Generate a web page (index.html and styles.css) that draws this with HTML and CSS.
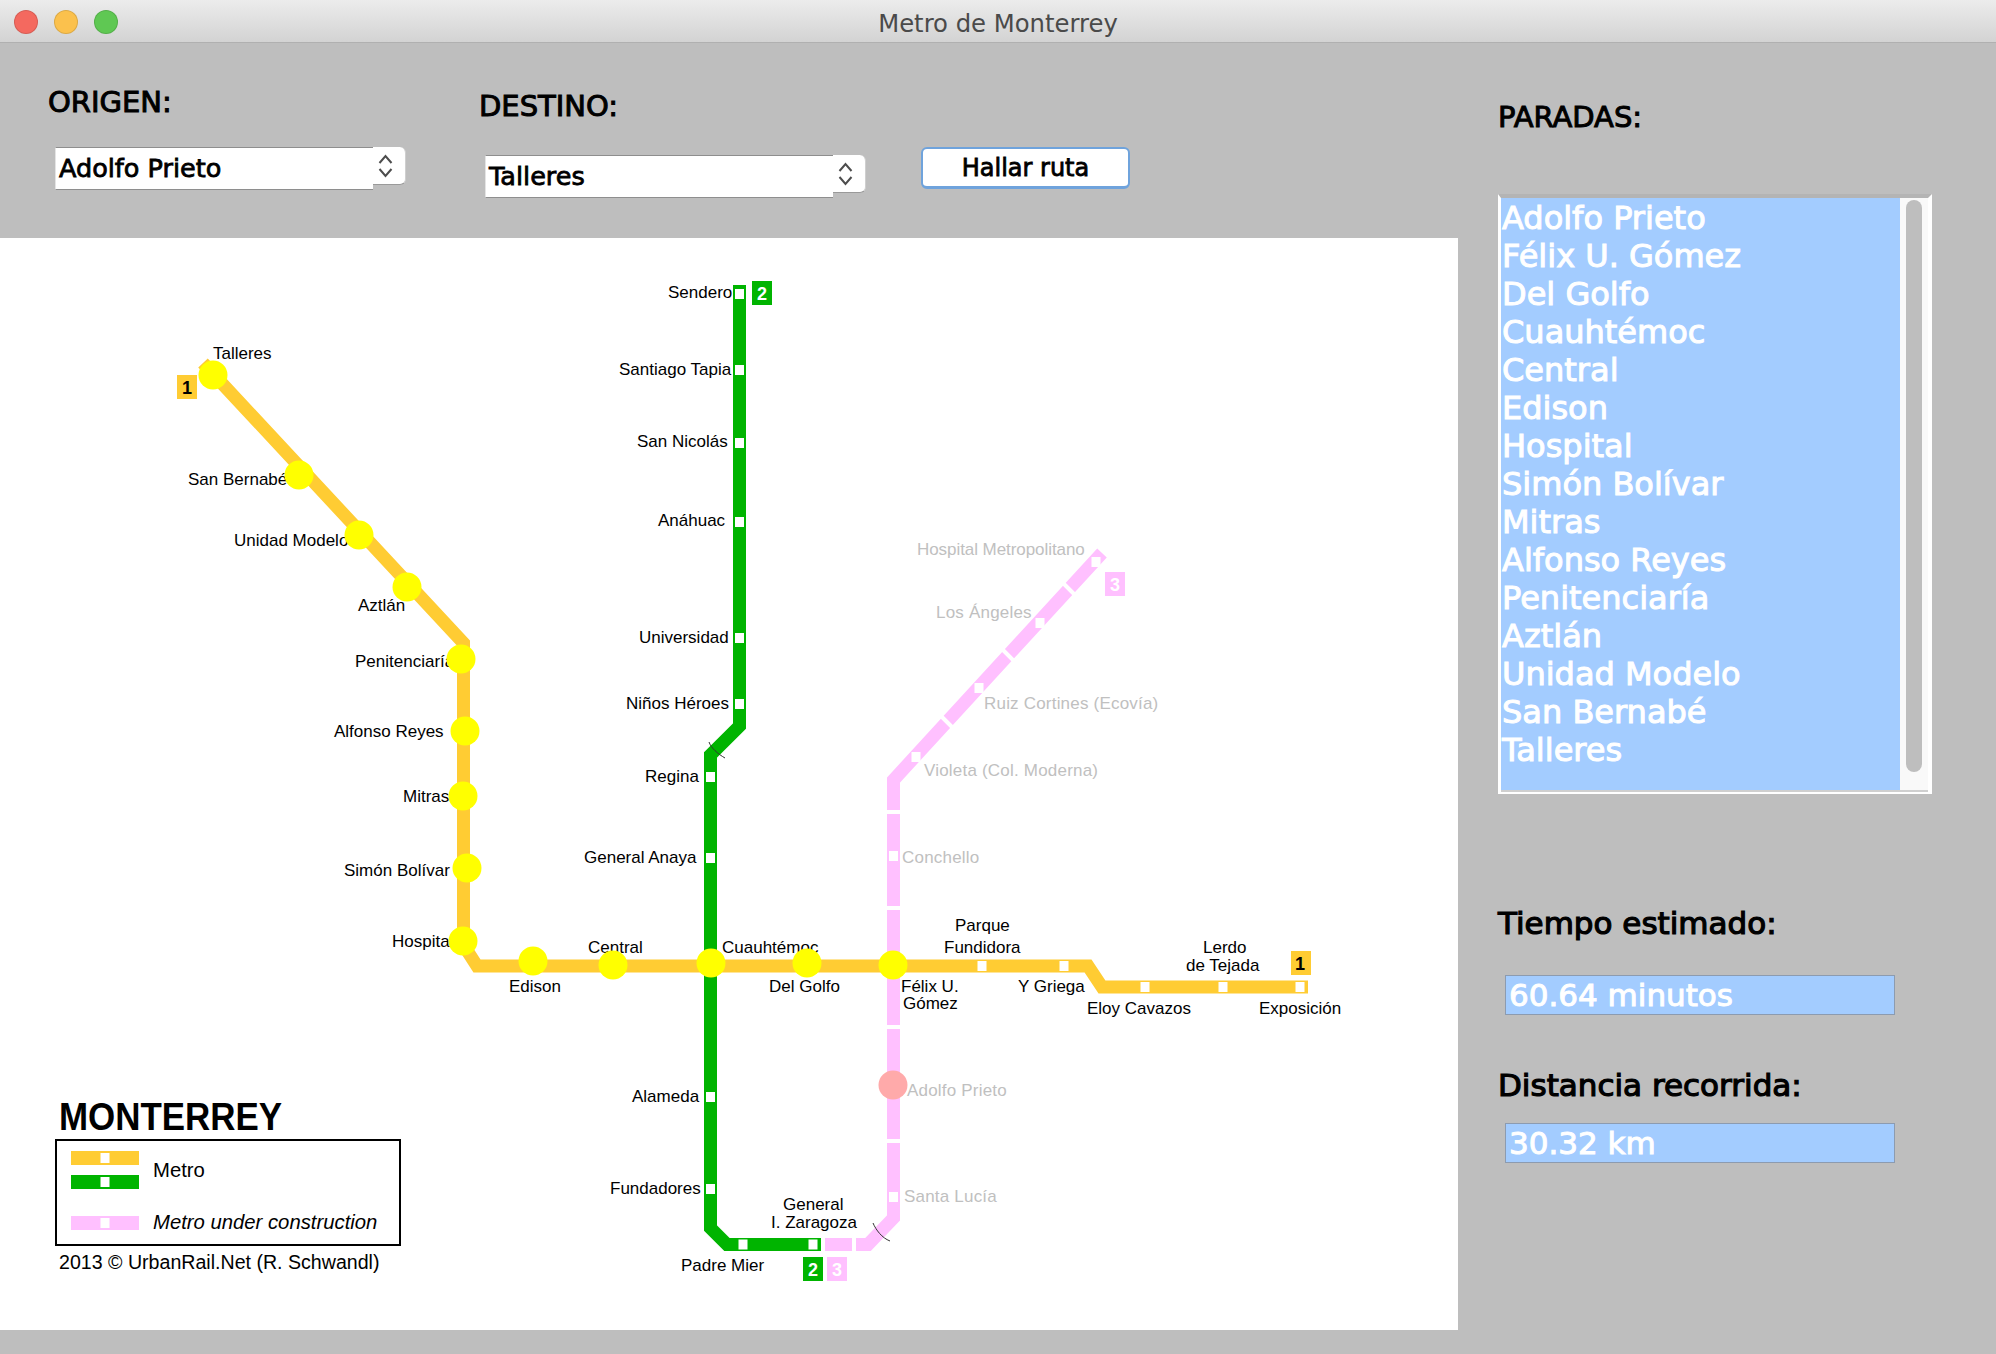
FILE: index.html
```html
<!DOCTYPE html>
<html lang="en">
<head>
  <meta charset="UTF-8">
  <title>Metro de Monterrey</title>
  <link rel="stylesheet" href="styles.css">
</head>
<body>
  <div id="window">
    <div id="titlebar">
      <div id="lights">
        <span class="light red"></span>
        <span class="light yellow"></span>
        <span class="light green"></span>
      </div>
      <div id="title">Metro de Monterrey</div>
    </div>

    <div id="content">
      <div id="left">
        <div id="controls">
          <div class="field origen">
            <div class="heading">ORIGEN:</div>
            <div class="combo">
              <div class="combo-value">Adolfo Prieto</div>
              <div class="combo-arrows">
                <svg width="15" height="24" viewBox="0 0 15 24"><path d="M1.500 9 7.500 2 13.500 9M1.500 15 7.500 22 13.500 15"/></svg>
              </div>
            </div>
          </div>
          <div class="field destino">
            <div class="heading">DESTINO:</div>
            <div class="combo">
              <div class="combo-value">Talleres</div>
              <div class="combo-arrows">
                <svg width="15" height="24" viewBox="0 0 15 24"><path d="M1.500 9 7.500 2 13.500 9M1.500 15 7.500 22 13.500 15"/></svg>
              </div>
            </div>
          </div>
          <button id="find-btn">Hallar ruta</button>
        </div>

        <svg id="map" width="1458" height="1092" viewBox="0 238 1458 1092">
          <defs>
            <rect id="stop" x="-4.500" y="-5" width="9" height="10" fill="#fff"/>
          </defs>

          <!-- line 3 -->
          <polyline class="line pink" points="1102,553 893.500,780 893.500,1218 868,1244.500 825,1244.500"/>
          <path class="gap" d="M1063 583 1077 597M1003 650 1017 664M940 715 954 729M885 812H902M885 908H902M885 1027H902M885 1141H902M854 1236V1253"/>

          <!-- line 2 -->
          <polyline class="line green" points="739.500,285 739.500,726 710.500,755 710.500,1228 727,1244.500 821,1244.500"/>
          <path class="tick" d="M709 742C711 748 718 754 725 758"/>
          <path class="tick" d="M873 1223C876 1230 882 1238 890 1241"/>

          <!-- line 1 -->
          <polyline class="line orange" points="203,363 463.500,643 463.500,945 477,966 1088,966 1102,987 1308,987"/>

          <use href="#stop" x="739.500" y="294"/>
          <use href="#stop" x="739.500" y="370"/>
          <use href="#stop" x="739.500" y="443"/>
          <use href="#stop" x="739.500" y="522"/>
          <use href="#stop" x="739.500" y="638"/>
          <use href="#stop" x="739.500" y="704"/>
          <use href="#stop" x="710.500" y="777"/>
          <use href="#stop" x="710.500" y="858"/>
          <use href="#stop" x="710.500" y="1097"/>
          <use href="#stop" x="710.500" y="1189"/>
          <use href="#stop" x="743" y="1244.500"/>
          <use href="#stop" x="813" y="1244.500"/>
          <use href="#stop" x="982" y="966"/>
          <use href="#stop" x="1064" y="966"/>
          <use href="#stop" x="1145" y="987"/>
          <use href="#stop" x="1223" y="987"/>
          <use href="#stop" x="1300" y="987"/>
          <use href="#stop" x="1096" y="562"/>
          <use href="#stop" x="1040" y="623"/>
          <use href="#stop" x="979" y="688"/>
          <use href="#stop" x="916" y="757"/>
          <use href="#stop" x="893.500" y="856"/>
          <use href="#stop" x="893.500" y="1197"/>

          <!-- line numbers -->
          <rect class="fill-orange" x="177" y="375" width="20" height="24"/>
          <text class="badge dark" x="187" y="394">1</text>
          <rect class="fill-orange" x="1291" y="951" width="20" height="24"/>
          <text class="badge dark" x="1300" y="970">1</text>
          <rect class="fill-green" x="752" y="281" width="20" height="24"/>
          <text class="badge" x="762" y="300">2</text>
          <rect class="fill-green" x="803" y="1257" width="20" height="24"/>
          <text class="badge" x="813" y="1276">2</text>
          <rect class="fill-pink" x="827" y="1257" width="20" height="24"/>
          <text class="badge" x="837" y="1276">3</text>
          <rect class="fill-pink" x="1105" y="572" width="20" height="24"/>
          <text class="badge" x="1115" y="591">3</text>

          <!-- station names, line 1 -->
          <text class="name" x="213" y="359">Talleres</text>
          <text class="name" x="188" y="485">San Bernabé</text>
          <text class="name" x="234" y="546">Unidad Modelo</text>
          <text class="name" x="358" y="611">Aztlán</text>
          <text class="name" x="355" y="667">Penitenciaría</text>
          <text class="name" x="334" y="737">Alfonso Reyes</text>
          <text class="name" x="403" y="802">Mitras</text>
          <text class="name" x="344" y="876">Simón Bolívar</text>
          <text class="name" x="392" y="947">Hospital</text>
          <text class="name" x="509" y="992">Edison</text>
          <text class="name" x="588" y="953">Central</text>
          <text class="name" x="722" y="953">Cuauhtémoc</text>
          <text class="name" x="769" y="992">Del Golfo</text>
          <text class="name" x="901" y="992">Félix U.</text>
          <text class="name" x="903" y="1009">Gómez</text>
          <text class="name" x="955" y="931">Parque</text>
          <text class="name" x="944" y="953">Fundidora</text>
          <text class="name" x="1203" y="953">Lerdo</text>
          <text class="name" x="1186" y="971">de Tejada</text>
          <text class="name" x="1018" y="992">Y Griega</text>
          <text class="name" x="1087" y="1014">Eloy Cavazos</text>
          <text class="name" x="1259" y="1014">Exposición</text>

          <!-- station names, line 2 -->
          <text class="name" x="668" y="298">Sendero</text>
          <text class="name" x="619" y="375">Santiago Tapia</text>
          <text class="name" x="637" y="447">San Nicolás</text>
          <text class="name" x="658" y="526">Anáhuac</text>
          <text class="name" x="639" y="643">Universidad</text>
          <text class="name" x="626" y="709">Niños Héroes</text>
          <text class="name" x="645" y="782">Regina</text>
          <text class="name" x="584" y="863">General Anaya</text>
          <text class="name" x="632" y="1102">Alameda</text>
          <text class="name" x="610" y="1194">Fundadores</text>
          <text class="name" x="783" y="1210">General</text>
          <text class="name" x="771" y="1228">I. Zaragoza</text>
          <text class="name" x="681" y="1271">Padre Mier</text>

          <!-- station names, line 3 -->
          <text class="name faded" x="917" y="555" textLength="168">Hospital Metropolitano</text>
          <text class="name faded" x="936" y="618">Los Ángeles</text>
          <text class="name faded" x="984" y="709">Ruiz Cortines (Ecovía)</text>
          <text class="name faded" x="924" y="776">Violeta (Col. Moderna)</text>
          <text class="name faded" x="902" y="863">Conchello</text>
          <text class="name faded" x="907" y="1096">Adolfo Prieto</text>
          <text class="name faded" x="904" y="1202">Santa Lucía</text>

          <!-- route -->
          <circle class="on-route" cx="213" cy="375" r="14.500"/>
          <circle class="on-route" cx="299" cy="475" r="14.500"/>
          <circle class="on-route" cx="359" cy="535" r="14.500"/>
          <circle class="on-route" cx="407" cy="587" r="14.500"/>
          <circle class="on-route" cx="461" cy="659" r="14.500"/>
          <circle class="on-route" cx="465" cy="731" r="14.500"/>
          <circle class="on-route" cx="463" cy="796" r="14.500"/>
          <circle class="on-route" cx="467" cy="868" r="14.500"/>
          <circle class="on-route" cx="463" cy="941" r="14.500"/>
          <circle class="on-route" cx="533" cy="961" r="14.500"/>
          <circle class="on-route" cx="613" cy="965" r="14.500"/>
          <circle class="on-route" cx="711" cy="963" r="14.500"/>
          <circle class="on-route" cx="807" cy="963" r="14.500"/>
          <circle class="on-route" cx="893" cy="965" r="14.500"/>
          <circle class="start" cx="893" cy="1085" r="14.500"/>

          <!-- legend -->
          <text class="city" x="59" y="1130" textLength="223" lengthAdjust="spacingAndGlyphs">MONTERREY</text>
          <rect class="legend-box" x="56" y="1140" width="344" height="105"/>
          <rect class="fill-orange" x="71" y="1151" width="68" height="14"/>
          <use href="#stop" x="105" y="1158"/>
          <rect class="fill-green" x="71" y="1175" width="68" height="14"/>
          <use href="#stop" x="105" y="1182"/>
          <rect class="fill-pink" x="71" y="1216" width="68" height="14"/>
          <use href="#stop" x="105" y="1223"/>
          <text class="legend-text" x="153" y="1177">Metro</text>
          <text class="legend-text italic" x="153" y="1229">Metro under construction</text>
          <text class="credit" x="59" y="1269">2013 © UrbanRail.Net (R. Schwandl)</text>
        </svg>
      </div>

      <div id="right">
        <div class="heading paradas">PARADAS:</div>
        <div id="stops">
          <div id="stops-list">
            <div>Adolfo Prieto</div>
            <div>Félix U. Gómez</div>
            <div>Del Golfo</div>
            <div>Cuauhtémoc</div>
            <div>Central</div>
            <div>Edison</div>
            <div>Hospital</div>
            <div>Simón Bolívar</div>
            <div>Mitras</div>
            <div>Alfonso Reyes</div>
            <div>Penitenciaría</div>
            <div>Aztlán</div>
            <div>Unidad Modelo</div>
            <div>San Bernabé</div>
            <div>Talleres</div>
          </div>
          <div id="scrollbar"><div id="thumb"></div></div>
        </div>

        <div class="stat-label tiempo">Tiempo estimado:</div>
        <div class="stat-value first">60.64 minutos</div>
        <div class="stat-label distancia">Distancia recorrida:</div>
        <div class="stat-value">30.32 km</div>
      </div>
    </div>
  </div>
</body>
</html>
```

FILE: styles.css
```css
html, body {
  margin: 0;
  padding: 0;
  height: 100%;
  overflow: hidden;
}
body {
  font-family: "DejaVu Sans", sans-serif;
  background-color: #bebebe;
  color: #000;
}
#window {
  width: 1996px;
  height: 1354px;
  display: flex;
  flex-direction: column;
}

/* title bar */
#titlebar {
  height: 42px;
  flex-shrink: 0;
  position: relative;
  display: flex;
  align-items: center;
  justify-content: center;
  background: linear-gradient(#ececec, #d3d3d3);
  border-bottom: 1px solid #b0b0b0;
}
#lights {
  position: absolute;
  left: 14px;
  top: 10px;
  display: flex;
  gap: 16px;
}
.light {
  width: 24px;
  height: 24px;
  border-radius: 50%;
  box-sizing: border-box;
  border: 1px solid rgba(0, 0, 0, 0.12);
}
.red { background-color: #f4695f; }
.yellow { background-color: #fbc14d; }
.green { background-color: #5fc853; }
#title {
  font-size: 24.3px;
  color: #4a4a4a;
  line-height: 42px;
  padding-top: 6px;
}

#content {
  flex: 1;
  display: flex;
}
#left {
  width: 1458px;
  flex-shrink: 0;
}

/* top controls */
#controls {
  height: 195px;
  padding-left: 48px;
  box-sizing: border-box;
  display: flex;
  align-items: flex-start;
}
.heading {
  font-size: 29px;
  line-height: 34px;
  -webkit-text-stroke: 1px #000;
}
.field.origen {
  width: 431px;
  padding-top: 42px;
}
.field.destino {
  width: 442px;
  padding-top: 46px;
}
.combo {
  display: flex;
  align-items: flex-start;
  margin-left: 7px;
}
.origen .combo { margin-top: 28px; }
.destino .combo { margin-top: 32px; margin-left: 6px; }
.combo-value {
  box-sizing: border-box;
  width: 318px;
  height: 43px;
  padding-left: 3px;
  background-color: #fff;
  border-top: 1px solid #8e8e8e;
  border-bottom: 1px solid #8e8e8e;
  border-left: 1px solid #e4e4e4;
  font-size: 25.5px;
  line-height: 41px;
  -webkit-text-stroke: 0.8px #000;
}
.destino .combo-value { width: 348px; }
.combo-arrows {
  box-sizing: border-box;
  width: 33px;
  height: 38px;
  padding: 0 0 0 5px;
  background-color: #fff;
  border-radius: 0 6px 6px 0;
  border-bottom: 1px solid #9a9a9a;
  border-right: 1px solid #cfcfcf;
  display: flex;
  align-items: center;
}
.combo-arrows path {
  fill: none;
  stroke: #4d4d4d;
  stroke-width: 2;
}
#find-btn {
  margin-top: 104px;
  width: 209px;
  height: 42px;
  padding: 1px 0 0;
  background-color: #fff;
  border: 2px solid #6fa3dc;
  border-bottom-width: 3px;
  border-radius: 6px;
  font-family: "DejaVu Sans", sans-serif;
  font-size: 24px;
  color: #000;
  -webkit-text-stroke: 0.8px #000;
}

/* map */
#map {
  display: block;
  background-color: #fff;
}
.line {
  fill: none;
  stroke-width: 13;
}
.line.orange { stroke: #ffcc33; }
.line.green { stroke: #00b400; }
.line.pink { stroke: #ffc0ff; }
.fill-orange { fill: #ffcc33; }
.fill-green { fill: #00b400; }
.fill-pink { fill: #ffc0ff; }
.gap {
  fill: none;
  stroke: #fff;
  stroke-width: 4;
}
.tick {
  fill: none;
  stroke: #333;
  stroke-width: 1;
}
.name {
  font-family: "Liberation Sans", sans-serif;
  font-size: 17px;
  fill: #000;
}
.name.faded {
  fill: #c0c0c0;
  letter-spacing: 0.2px;
}
.legend-text {
  font-family: "Liberation Sans", sans-serif;
  font-size: 20.3px;
}
.legend-text.italic { font-style: italic; }
.badge {
  font-family: "Liberation Sans", sans-serif;
  font-size: 18px;
  font-weight: bold;
  fill: #fff;
  text-anchor: middle;
}
.badge.dark { fill: #000; }
.on-route { fill: #ffff00; }
.start { fill: #ffaaaa; }
.city {
  font-family: "Liberation Sans", sans-serif;
  font-size: 38px;
  font-weight: bold;
}
.legend-box {
  fill: none;
  stroke: #000;
  stroke-width: 2;
}
.credit {
  font-family: "Liberation Sans", sans-serif;
  font-size: 19.6px;
}

/* right column */
#right {
  flex: 1;
  padding-left: 40px;
}
.paradas {
  font-size: 29px;
  margin-top: 57px;
}
#stops {
  box-sizing: border-box;
  width: 434px;
  height: 600px;
  margin-top: 60px;
  display: flex;
  background-color: #f9f9f9;
  border-top: 4px solid #b4b4b4;
  border-left: 3px solid #fff;
  border-right: 4px solid #fff;
  border-bottom: 2px solid #fff;
}
#stops-list {
  box-sizing: border-box;
  width: 399px;
  flex-shrink: 0;
  background-color: #a3ccff;
  border-bottom: 2px solid #cfcfcf;
  color: #fff;
  font-size: 32px;
  line-height: 38px;
  padding: 1px 0 0 1px;
  -webkit-text-stroke: 1px #fff;
}
#scrollbar {
  box-sizing: border-box;
  flex: 1;
  padding: 2px 6px 0;
  border-bottom: 2px solid #cfcfcf;
}
#thumb {
  width: 16px;
  height: 572px;
  border-radius: 8px;
  background-color: #bebebe;
}
.stat-label {
  font-size: 31px;
  line-height: 36px;
  -webkit-text-stroke: 1.2px #000;
}
.tiempo { margin-top: 111px; }
.distancia { margin-top: 52px; }
.stat-value {
  box-sizing: border-box;
  width: 390px;
  height: 40px;
  margin: 20px 0 0 7px;
  padding-left: 3px;
  background-color: #a3ccff;
  border: 1px solid #8c9bb0;
  color: #fff;
  font-size: 31px;
  line-height: 38px;
  -webkit-text-stroke: 1px #fff;
}
.stat-value.first { margin-top: 34px; }
```
